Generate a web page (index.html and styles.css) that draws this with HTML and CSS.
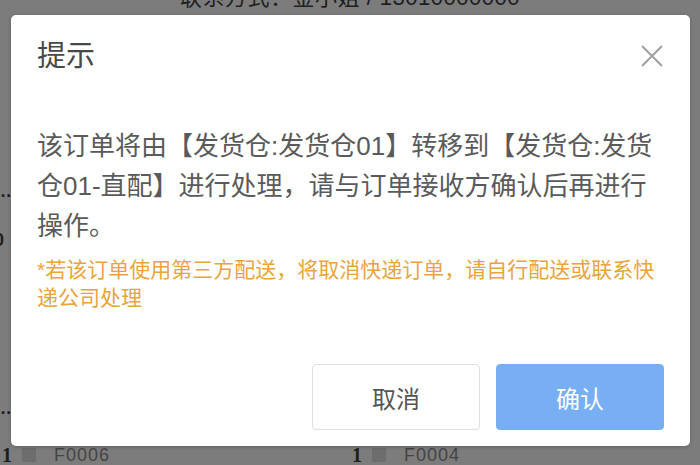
FILE: index.html
```html
<!DOCTYPE html>
<html lang="zh-CN">
<head>
    <meta charset="UTF-8">
    <meta name="viewport" content="width=device-width, initial-scale=1.0">
    <title>提示</title>
    <link rel="stylesheet" href="styles.css">
</head>
<body>
    <!-- page under the mask -->
    <div class="page">
        <p class="contact">联系方式：金小姐 / 13010000000</p>
        <ul class="side_cells">
            <li class="short">…</li>
            <li class="tall">0</li>
            <li>…</li>
        </ul>
        <div class="order_row">
            <div class="cell"><b>1</b><i class="box"></i><span>F0006</span></div>
            <div class="cell"><b>1</b><i class="box"></i><span>F0004</span></div>
        </div>
    </div>

    <div class="dialog">
        <div class="dialog_header">
            <span class="dialog_title">提示</span>
            <button class="dialog_close" type="button">
                <svg width="24" height="24" viewBox="0 0 24 24">
                    <path d="M2 2 L22 22 M22 2 L2 22" stroke="#a0a0a0" stroke-width="2" fill="none"/>
                </svg>
            </button>
        </div>
        <div class="dialog_body">
            <p class="msg">该订单将由【发货仓:发货仓01】转移到【发货仓:发货仓01-直配】进行处理，请与订单接收方确认后再进行操作。</p>
            <p class="tip">*若该订单使用第三方配送，将取消快递订单，请自行配送或联系快递公司处理</p>
        </div>
        <div class="dialog_footer">
            <button class="btn btn_cancel" type="button">取消</button>
            <button class="btn btn_ok" type="button">确认</button>
        </div>
    </div>
</body>
</html>
```

FILE: styles.css
```css
html, body {
    margin: 0;
    height: 100%;
}
body {
    background: #7c7c7c;
    font-family: "Liberation Sans", "Noto Sans CJK SC", sans-serif;
    overflow: hidden;
}
.page {
    height: 465px;
    display: flex;
    flex-direction: column;
    color: #1e1e1e;
}
.contact {
    margin: -15px 0 0;
    text-align: center;
    font-size: 22px;
    line-height: 26px;
    letter-spacing: 0.5px;
}
.side_cells {
    list-style: none;
    margin: 160px 0 0;
    padding: 0;
    width: 11px;
}
.side_cells li {
    height: 40px;
    line-height: 40px;
    font-size: 18px;
    font-weight: bold;
    overflow: hidden;
    text-indent: -6px;
}
.side_cells .short {
    height: 49px;
}
.side_cells .tall {
    height: 168px;
}
.order_row {
    margin-top: auto;
    display: flex;
    height: 20px;
    font-size: 18px;
    line-height: 20px;
}
.order_row .cell {
    width: 362px;
    display: flex;
    align-items: center;
}
.order_row b {
    width: 20px;
    padding-left: 2px;
    font-family: "Liberation Serif", serif;
    font-size: 20px;
}
.order_row .box {
    width: 14px;
    height: 14px;
    background: #6d6d6d;
    margin-right: 18px;
}
.order_row span {
    color: #444;
    letter-spacing: 1px;
}

/* dialog */
.dialog {
    position: absolute;
    left: 11px;
    top: 15px;
    width: 679px;
    height: 431px;
    box-sizing: border-box;
    background: #fff;
    border-radius: 5px;
    box-shadow: 0 1px 4px rgba(0, 0, 0, 0.2);
    display: flex;
    flex-direction: column;
}
.dialog_header {
    display: flex;
    align-items: center;
    justify-content: space-between;
    padding: 24px 26px 0 26px;
    height: 34px;
}
.dialog_title {
    font-size: 29px;
    line-height: 34px;
    color: #484848;
}
.dialog_close {
    border: 0;
    background: none;
    padding: 0;
    width: 24px;
    height: 24px;
}
.dialog_body {
    padding: 53px 26px 0;
}
.msg {
    margin: 0;
    font-size: 26px;
    line-height: 40px;
    color: #5a5a5a;
}
.tip {
    margin: 10px 0 0;
    font-size: 21px;
    line-height: 28px;
    color: #e8a53c;
}
.dialog_footer {
    margin-top: auto;
    display: flex;
    justify-content: flex-end;
    gap: 16px;
    padding: 0 26px 16px;
}
.btn {
    width: 168px;
    height: 66px;
    border-radius: 4px;
    font-family: inherit;
    font-size: 24px;
}
.btn_cancel {
    background: #fff;
    border: 1px solid #e0e0e0;
    color: #555;
}
.btn_ok {
    background: #78aef4;
    border: 1px solid #78aef4;
    color: #fff;
}
```
